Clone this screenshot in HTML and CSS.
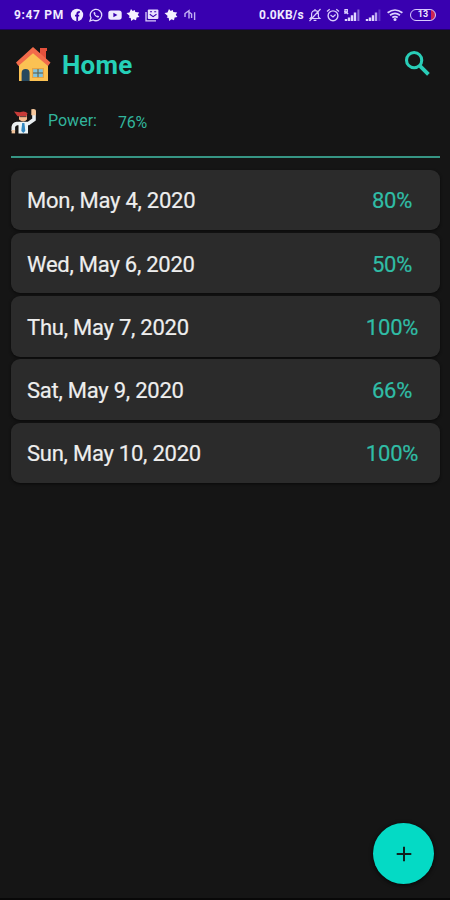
FILE: index.html
```
<!DOCTYPE html>
<html lang="en">
<head>
<meta charset="utf-8">
<title>Home</title>
<link rel="stylesheet" href="styles.css">
</head>
<body>
<div class="statusbar">
  <span class="time">9:47 PM</span>
  <div class="notifications">
    <svg viewBox="0 0 14 14"><circle cx="7" cy="7" r="6.2" fill="#f0eaff"/><path d="M7.2 13V6.2Q7.2 4 9.8 4M5 7.6h4.2" fill="none" stroke="#3900b0" stroke-width="1.8"/></svg>
    <svg viewBox="0 0 14 14"><path d="M1 13l1-3.2A5.7 5.7 0 1 1 4.2 12z" fill="none" stroke="#e2d8ff" stroke-width="1.3"/><path d="M4.7 4.2c-.8 2 2.7 5.6 4.8 5.3l.7-1.2-1.5-.9-.8.6L6 6.3l.6-.8-.8-1.6z" fill="#e2d8ff"/></svg>
    <svg viewBox="0 0 14 14"><rect x=".3" y="2.4" width="13.4" height="9.4" rx="2.7" fill="#f0eaff"/><path d="M5.4 4.8v4.5l4-2.25z" fill="#3900b0"/></svg>
    <svg viewBox="0 0 14 14"><path d="M5 1l1.7 2 2-1 .6 2.1 3.9.3-1.5 2.4 1.7 2.1-2.8.5-.6 2.9-2.5-1-2.3 1.8-.5-3-2-.5 1-1.7L.5 5l3-.5z" fill="#f6f1ff"/></svg>
    <svg viewBox="0 0 14 14"><path d="M1 4v8.8h10" fill="none" stroke="#d9ccfa" stroke-width="1.3"/><rect x="2.8" y="1.4" width="10.6" height="9.5" rx="1" fill="#e8e0ff"/><path d="M5 3.8h2M9.2 3.8h2M4.8 6.2l3.3 2.4 3.4-2.4" fill="none" stroke="#3900b0" stroke-width="1.1"/></svg>
    <svg viewBox="0 0 14 14"><path d="M5 1l1.7 2 2-1 .6 2.1 3.9.3-1.5 2.4 1.7 2.1-2.8.5-.6 2.9-2.5-1-2.3 1.8-.5-3-2-.5 1-1.7L.5 5l3-.5z" fill="#f6f1ff"/></svg>
    <svg viewBox="0 0 14 14"><path d="M2 9V5.5l4-2.8V10.5M6 4l2.6 2v4M11.6 4.3v7.8" fill="none" stroke="#c3b1f4" stroke-width="1.4"/></svg>
  </div>
  <div class="system">
    <span class="speed">0.0KB/s</span>
    <svg class="bell" viewBox="0 0 14 14"><path d="M2.2 10.5h9.6L10.4 9V6c0-2-1.3-3.3-3.4-3.3S3.6 4 3.6 6v3zM5.6 12.4h2.8M7 2.7V1M1.5 13L12.5 1" fill="none" stroke="#d8ccfb" stroke-width="1.2"/></svg>
    <svg class="alarm" viewBox="0 0 14 14"><circle cx="7" cy="7.8" r="4.9" fill="none" stroke="#d8ccfb" stroke-width="1.4"/><path d="M1 3.5L3.7 1.2M13 3.5l-2.7-2.3M4.5 7l2.5 2 2.6-2.5" fill="none" stroke="#d8ccfb" stroke-width="1.3"/></svg>
    <svg class="signal" viewBox="0 0 16 14"><path d="M2 13v-2M5 13V9.5M8 13V7.2M11 13V4.5" stroke="#e0d5ff" stroke-width="2.4"/><path d="M14.4 13V1.5" stroke="#8c6dd8" stroke-width="2"/><path d="M1 6V1.7h2.3v2.2H1l3.2 2" fill="none" stroke="#dcd0ff" stroke-width="1.3"/></svg>
    <svg class="signal second" viewBox="0 0 16 14"><path d="M2 13v-2M5 13V9.5M8 13V7.2" stroke="#e0d5ff" stroke-width="2.4"/><path d="M11 13V4.5" stroke="#baa4ef" stroke-width="2.4"/><path d="M14.4 13V1.5" stroke="#6035c6" stroke-width="2"/></svg>
    <svg class="wifi" viewBox="0 0 16 14"><path d="M.6 4.7q7.4-5.4 14.8 0M3 7.2q5-3.7 10 0M5.3 9.5q2.7-1.8 5.4 0" fill="none" stroke="#dfd4ff" stroke-width="1.7"/><circle cx="8" cy="11.6" r="1.5" fill="#dfd4ff"/></svg>
    <div class="battery"><span>13</span></div>
  </div>
</div>
<header class="appbar">
  <svg class="house" viewBox="0 0 36 36"><path d="M25 2h7v3h-1v9l-6-5z" fill="#e4513d"/><path d="M4 17L18 5l15 12v18H4z" fill="#fbc253"/><path d="M18 1L1 16.5l2.4 3.6L18 7.2 33 20l2.5-3.4z" fill="#f26b4b"/><path d="M6.6 35V27q0-4 4-4t4 4v8z" fill="#26485e"/><path d="M17 22h12v10H17z" fill="#e9a542"/><path d="M18.2 23.2h4.2v3.3h-4.2zm5.4 0h4.2v3.3h-4.2zm-5.4 4.4h4.2V31h-4.2zm5.4 0h4.2V31h-4.2z" fill="#7fc4df"/><path d="M23 23v8.2M18 27h10" stroke="#33647b"/></svg>
  <h1>Home</h1>
  <svg class="search" viewBox="0 0 28 28"><circle cx="10.5" cy="10.5" r="7.9" fill="none" stroke="#29cdb7" stroke-width="3.2"/><path d="M16.5 16.5l8.8 8.8" stroke="#29cdb7" stroke-width="3.9"/></svg>
</header>
<section class="power">
  <svg viewBox="0 0 26 26"><path d="M23 7v4.5L17.5 15.5H6Q2.8 16 2.3 19v4" fill="none" stroke="#e9eef0" stroke-width="3.6"/><path d="M7.5 14h9.5v11.5H7.5z" fill="#edf4f5"/><path d="M20.3 1.2q4.7-1 4.7 2v4h-4.7z" fill="#f6c79c"/><path d="M8 6h8v5.5q-3.5 4-8 0z" fill="#f4b98c"/><path d="M3 3.5l6 .8q5-2 7.5 1l-1 3H6.5z" fill="#c73b38"/><path d="M8.5 8.6h7" stroke="#61413e" stroke-width="1.1"/><path d="M11.2 15h2.2l.9 8-2 2-2-2z" fill="#3488bf"/><path d="M.6 22h3.5v3.4H.6z" fill="#efc39b"/></svg>
  <span class="label">Power:</span>
  <span class="value">76%</span>
</section>
<main>
  <div class="card"><span class="date">Mon, May 4, 2020</span><span class="pct">80%</span></div>
  <div class="card"><span class="date">Wed, May 6, 2020</span><span class="pct">50%</span></div>
  <div class="card"><span class="date">Thu, May 7, 2020</span><span class="pct">100%</span></div>
  <div class="card"><span class="date">Sat, May 9, 2020</span><span class="pct">66%</span></div>
  <div class="card"><span class="date">Sun, May 10, 2020</span><span class="pct">100%</span></div>
</main>
<button class="fab" aria-label="Add"><svg viewBox="0 0 16 16"><path d="M8 .7v14.6M.7 8h14.6" stroke="#10211f" stroke-width="2"/></svg></button>
</body>
</html>
```
FILE: styles.css
```
* { box-sizing: border-box; }
body {
  margin: 0;
  height: 900px;
  overflow: hidden;
  display: flex;
  flex-direction: column;
  background: #151515;
  color: #eee;
  font-family: Roboto, sans-serif;
  border-bottom: 2px solid #080808;
}
svg { display: block; flex: none; }
.statusbar {
  height: 30px;
  flex: none;
  display: flex;
  align-items: center;
  padding: 0 14px;
  background: #3900b0;
  border-bottom: 1px solid #220068;
  color: #f0eaff;
  font-size: 12px;
  font-weight: 700;
}
.time { width: 56px; padding-top: 1px; white-space: nowrap; letter-spacing: .65px; }
.notifications { display: flex; gap: 4.8px; }
.notifications svg { width: 14px; height: 14px; }
.system { display: flex; align-items: center; margin-left: auto; }
.speed { width: 49px; padding-top: 1px; white-space: nowrap; letter-spacing: .25px; }
.bell, .alarm { width: 14px; height: 14px; margin-right: 4px; }
.signal { width: 16px; height: 14px; margin-right: 5px; }
.second { margin-right: 6px; }
.wifi { width: 16px; height: 14px; margin-right: 7px; }
.battery {
  width: 26px;
  height: 12px;
  border: 1.5px solid #d8caff;
  border-radius: 6px;
  background: linear-gradient(90deg, transparent 82%, #cc2454 82%);
  display: flex;
  align-items: center;
  justify-content: center;
  font-size: 9px;
  line-height: 9px;
}
.appbar {
  height: 70px;
  flex: none;
  display: flex;
  align-items: center;
  padding: 0 19px 0 15px;
}
.house { width: 36px; height: 36px; margin-top: -3px; }
h1 {
  margin: 0 0 0 11px;
  font-size: 26px;
  line-height: 30px;
  font-weight: 700;
  letter-spacing: .2px;
  color: #25d0b8;
}
.search { width: 27px; height: 27px; margin: -4px 0 0 auto; }
.power {
  height: 58px;
  flex: none;
  margin: 0 10px 0 11px;
  border-bottom: 2px solid #369584;
  display: flex;
  align-items: flex-start;
  padding-top: 9px;
  color: #32b49c;
  font-size: 16px;
  line-height: 22px;
}
.power svg { width: 26px; height: 26px; margin-top: -1px; }
.label { width: 71px; margin-left: 10px; padding: 1px 0 0 1px; }
.value { padding-top: 3px; letter-spacing: -.2px; }
main {
  margin: 11.5px 10px 0 11px;
  display: flex;
  flex-direction: column;
  gap: 2.8px;
}
.card {
  height: 60.5px;
  border-radius: 9px;
  background: #2b2b2b;
  box-shadow: 0 1px 3px #0a0a0a;
  display: flex;
  align-items: center;
  justify-content: space-between;
  padding: 2px 8px 0 16px;
  font-size: 22px;
}
.date { letter-spacing: -.24px; -webkit-text-stroke: .2px #eee; }
.pct { width: 80px; text-align: center; letter-spacing: -.2px; color: #30bda6; -webkit-text-stroke: .2px #30bda6; }
.fab {
  position: absolute;
  right: 16px;
  bottom: 16px;
  width: 61px;
  height: 61px;
  padding: 0;
  border: 0;
  border-radius: 50%;
  background: #04dac5;
  box-shadow: 0 1px 4px #050505;
  display: flex;
  align-items: center;
  justify-content: center;
}
.fab svg { width: 16px; height: 16px; }
```
